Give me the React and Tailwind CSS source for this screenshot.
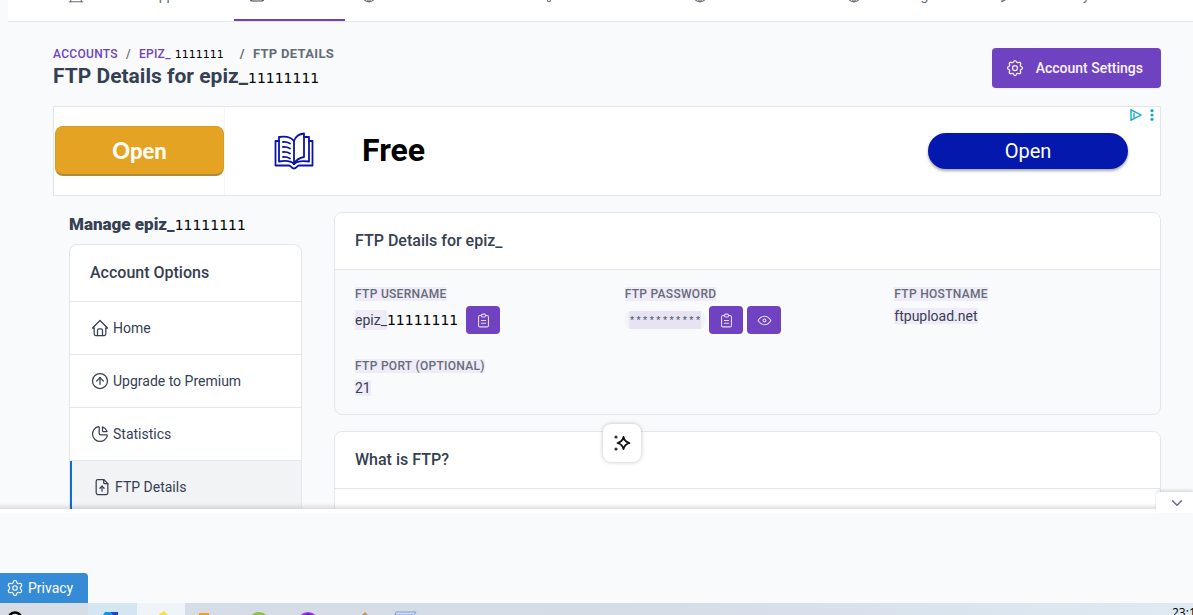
import React from "react";
import {
  TbBuilding,
  TbBulb,
  TbChartPie,
  TbChevronDown,
  TbCircleArrowUp,
  TbClipboardText,
  TbEye,
  TbFileUpload,
  TbHome,
  TbMessage,
  TbServer,
  TbSettings,
  TbWorld,
} from "react-icons/tb";
import { Settings } from "lucide-react";

const NAV = [
  { label: "Website Support", icon: TbBuilding },
  { label: "Accounts", icon: TbServer, active: true },
  { label: "Free Subdomains", icon: TbWorld },
  { label: "Site Builder", icon: TbBulb },
  { label: "Test Domains", icon: TbWorld },
  { label: "Knowledge", icon: TbWorld },
  { label: "Community", icon: TbMessage },
];

const OPTIONS = [
  { label: "Home", icon: TbHome },
  { label: "Upgrade to Premium", icon: TbCircleArrowUp },
  { label: "Statistics", icon: TbChartPie },
  { label: "FTP Details", icon: TbFileUpload, active: true },
];

export default function App() {
  return (
    <div className="flex h-screen flex-col overflow-hidden bg-[#f9fafc] font-[Roboto,sans-serif] text-sm text-[#354052]">
      <div className="relative min-h-0 flex-1 overflow-hidden">
        <TopNav />

        <main className="pt-6 pr-8 pl-[53px]">
          <PageHeader />
          <AdBanner />

          <div className="mt-4 flex items-start gap-8 pl-4">
            <Sidebar />
            <div className="min-w-0 flex-1 space-y-4">
              <FtpCard />
              <Card title="What is FTP?">
                <div className="h-20 bg-white" />
              </Card>
            </div>
          </div>
        </main>

        <button
          aria-label="Ask assistant"
          className="absolute top-[424px] left-[603px] flex size-[38px] items-center justify-center rounded-lg bg-white shadow-[0_0_4px_rgba(0,0,0,0.25)]"
        >
          <SparkIcon />
        </button>

        <div className="absolute inset-x-0 bottom-0 h-[6px] bg-linear-to-b from-black/0 to-black/12" />
      </div>

      <div className="relative flex h-[94px] shrink-0 items-end border-t-4 border-white">
        <button
          aria-label="Collapse ad"
          className="absolute -top-[21px] right-0 flex h-[21px] w-[37px] items-center justify-center rounded-tl bg-white pl-1 text-[#6b6b85] shadow-[0_-2px_3px_rgba(0,0,0,0.12)]"
        >
          <TbChevronDown size={18} strokeWidth={2} />
        </button>
        <button className="flex h-[30px] w-[88px] items-center gap-1 rounded-tr bg-[#368bd6] pl-[6px] text-white">
          <Settings size={18} strokeWidth={1.5} />
          Privacy
        </button>
      </div>

      <Taskbar />
    </div>
  );
}

function TopNav() {
  return (
    <nav className="ml-2 grid h-[22px] grid-cols-[182px_111px_180px_151px_154px_151px_1fr] content-end items-end overflow-hidden border-b border-[#e3e6ea] bg-white pl-[45px]">
      {NAV.map((n) => (
        <a
          key={n.label}
          href="#"
          className={
            n.active
              ? "flex w-[111px] items-center gap-1 border-b-2 border-[#6f42c1] px-[14px] pb-[14px] -ml-px text-[#354052]"
              : "flex items-center gap-1 px-[14px] pb-4 text-[#656d77]"
          }
        >
          <n.icon size={18} strokeWidth={1.5} className="shrink-0" />
          <span className="leading-5 whitespace-nowrap">{n.label}</span>
        </a>
      ))}
    </nav>
  );
}

function PageHeader() {
  return (
    <div className="flex items-center justify-between">
      <div>
        <div className="flex text-xs leading-4 font-medium tracking-wide text-[#656d77] uppercase">
          <a href="#" className="text-[#6f42c1]">Accounts</a>
          <span className="mx-2">/</span>
          <a href="#" className="text-[#6f42c1]">
            epiz_
            <span className="ml-1 font-['DejaVu_Sans'] text-[11px] leading-none font-normal tracking-normal text-black">
              1111111
            </span>
          </a>
          <span className="mr-2 ml-4 text-[13px] font-bold">/</span>
          <span className="text-[13px] font-bold">FTP Details</span>
        </div>
        <h1 className="text-[21px] leading-7 font-bold">
          FTP Details for epiz_<Digits />
        </h1>
      </div>

      <button className="flex h-10 items-center gap-[11px] rounded bg-[#6f42c1] pr-[18px] pl-[13px] font-medium text-[#f8f5fd] shadow-xs">
        <TbSettings size={20} strokeWidth={1.5} />
        Account Settings
      </button>
    </div>
  );
}

function Digits() {
  return <span className="font-['DejaVu_Sans'] text-sm leading-none font-normal text-black">11111111</span>;
}

function AdBanner() {
  return (
    <div className="relative mt-4 flex h-[90px] items-center border border-[#e3e5e8] bg-white">
      <div className="flex h-full w-[171px] items-center border-r border-[#f6f6f8] pl-px">
        <button className="h-[50px] w-full rounded-lg border border-b-2 border-[#d59a20] border-b-[#b08a3c] bg-[#e4a323] font-[Lato,sans-serif] text-[22px] font-black text-[#fffdf5]">
          Open
        </button>
      </div>
      <BookIcon />
      <span className="ml-12 text-[32px] font-bold text-black">Free</span>
      <button className="mr-8 ml-auto h-9 w-[200px] rounded-full bg-[#0418ad] text-xl text-white shadow-[0_2px_3px_rgba(0,0,0,0.35)]">
        Open
      </button>

      <div className="absolute top-[2px] right-[6px] flex items-center gap-2">
        <svg width="12" height="12" viewBox="0 0 12 12" fill="none" stroke="#18a9cf" strokeWidth="1.4">
          <path d="M1 .8v10.4L11 6z" />
          <path d="M4 3.8v5.4" />
        </svg>
        <svg width="4" height="12" viewBox="0 0 4 12" fill="#18a9cf">
          <circle cx="2" cy="1.7" r="1.6" />
          <circle cx="2" cy="6" r="1.6" />
          <circle cx="2" cy="10.3" r="1.6" />
        </svg>
      </div>
    </div>
  );
}

function Sidebar() {
  return (
    <aside className="w-[233px] shrink-0">
      <h2 className="text-[17px] leading-6 font-black">
        Manage epiz_<Digits />
      </h2>
      <div className="mt-2 overflow-hidden rounded-lg border border-[#e3e6ea] bg-white">
        <h3 className="flex h-[57px] items-center border-b border-[#e3e6ea] px-5 text-base font-medium">
          Account Options
        </h3>
        {OPTIONS.map((o) => (
          <a
            key={o.label}
            href="#"
            className={
              o.active
                ? "flex h-[53px] items-center gap-[3px] border-b border-l-2 border-b-[#e3e6ea] border-l-[#0d6fd1] bg-[#f2f3f5] px-5"
                : "flex h-[53px] items-center gap-[3px] border-b border-[#e3e6ea] px-5"
            }
          >
            <o.icon size={20} strokeWidth={1.5} />
            {o.label}
          </a>
        ))}
      </div>
    </aside>
  );
}

function Card({ title, children }) {
  return (
    <section className="overflow-hidden rounded-lg border border-[#e3e6ea]">
      <h3 className="flex h-[57px] items-center border-b border-[#e3e6ea] bg-white px-5 text-base font-medium">
        {title}
      </h3>
      {children}
    </section>
  );
}

function FtpCard() {
  return (
    <Card title="FTP Details for epiz_">
      <dl className="-mr-1 grid grid-cols-3 gap-y-6 py-4 pl-5">
        <Field label="FTP Username">
          <div className="flex items-center">
            <Marked>epiz_</Marked>
            <Digits />
            <IconButton label="Copy username" icon={TbClipboardText} className="ml-2" />
          </div>
        </Field>
        <Field label="FTP Password">
          <div className="flex items-center gap-1">
            <span className="rounded-md bg-[#f2f3f6] px-1 font-['Liberation_Mono',monospace] text-[11px] leading-[18px]">
              <span className="inline-block h-[18px] bg-[#e8e3f2] pt-px align-top text-[#4a5568]">***********</span>
            </span>
            <IconButton label="Copy password" icon={TbClipboardText} />
            <IconButton label="Show password" icon={TbEye} />
          </div>
        </Field>
        <Field label="FTP Hostname">
          <Marked>ftpupload.net</Marked>
        </Field>
        <Field label="FTP Port (optional)">
          <Marked>21</Marked>
        </Field>
      </dl>
    </Card>
  );
}

function Field({ label, children }) {
  return (
    <div>
      <dt className="text-xs leading-4 font-medium tracking-wide text-[#656d77] uppercase">
        <span className="bg-[#f0ebf8]">{label}</span>
      </dt>
      <dd className="mt-1 leading-5">{children}</dd>
    </div>
  );
}

function Marked({ children }) {
  return <span className="bg-[#f0ebf8]">{children}</span>;
}

function IconButton({ label, icon: Icon, className = "" }) {
  return (
    <button
      aria-label={label}
      className={`flex h-7 w-[34px] items-center justify-center rounded bg-[#6f42c1] text-[#e6dcf7] ${className}`}
    >
      <Icon size={17} strokeWidth={1.5} />
    </button>
  );
}

function SparkIcon() {
  return (
    <svg width="18" height="18" viewBox="0 0 18 18" fill="none" stroke="#111" strokeWidth="1.8" strokeLinejoin="round">
      <path d="M10.5 3c.8 3.6 2 5 6 6c-4 1-5.200 2.400-6 6c-.8-3.600-2-5-6-6c4-1 5.200-2.400 6-6z" />
      <circle cx="3" cy="3" r="1.6" fill="#333" stroke="none" />
      <circle cx="3" cy="15" r="1.6" fill="#333" stroke="none" />
    </svg>
  );
}

function BookIcon() {
  return (
    <svg
      className="ml-[49px] shrink-0"
      width="40"
      height="38"
      viewBox="0 0 40 38"
      fill="none"
      stroke="#0b14a8"
      strokeWidth="1.8"
      strokeLinecap="round"
      strokeLinejoin="round"
    >
      <path d="M5 9H1.500v24.500h13.500c2 0 2.500 3 5 3s3-3 5-3h13.500V9H35" />
      <path d="M5 5v24.500c6-1 12-.5 15 2.500V9C17 5 11 4 5 5z" />
      <path d="M20 9c1.500-4.500 5-7 10-7.500v23.500c-5 .8-8 3-10 7" />
      <path d="M30 5h5v24.500c-6-.8-12-.5-15 2.500" />
      <path d="M9 10c3-.2 5 .3 7 1.500M9 15c3-.2 5 .3 7 1.500M9 20c3-.2 5 .3 7 1.500M9 25c3-.2 5 .3 7 1.500" />
    </svg>
  );
}

function Taskbar() {
  return (
    <footer className="flex h-3 shrink-0 justify-between bg-linear-to-r from-[#d6dde6] via-[#d4dce6] to-[#dfeaf3]">
      <svg width="430" height="12" viewBox="0 0 430 12">
        <rect x="88" width="49" height="12" fill="#d3e6f2" />
        <rect x="137" width="48" height="12" fill="#eef4f8" />
        <circle cx="15" cy="16" r="6.500" fill="none" stroke="#000" strokeWidth="2.500" />
        <path d="M105 9h13v3h-15z" fill="#1593e6" />
        <path d="M111 9h7v3h-5z" fill="#1746c9" />
        <path d="M158 12l6-4 4 4z" fill="#fbe042" />
        <path d="M199 10h10v2h-10z" fill="#f0a01c" />
        <circle cx="259" cy="20" r="11" fill="#8cc152" />
        <circle cx="308" cy="20" r="11" fill="#a13df0" />
        <path d="M304 12l4-2 5 2z" fill="#6b1bb0" />
        <path d="M362 12l3-3 3 3z" fill="#c89563" />
        <path d="M396 9h20l-2 3h-19z" fill="#cfe0f6" stroke="#7d9fd0" />
      </svg>
      <span className="w-[21px] pt-1 font-['Open_Sans',sans-serif] text-xs leading-3 whitespace-nowrap text-black">
        23:1
      </span>
    </footer>
  );
}
